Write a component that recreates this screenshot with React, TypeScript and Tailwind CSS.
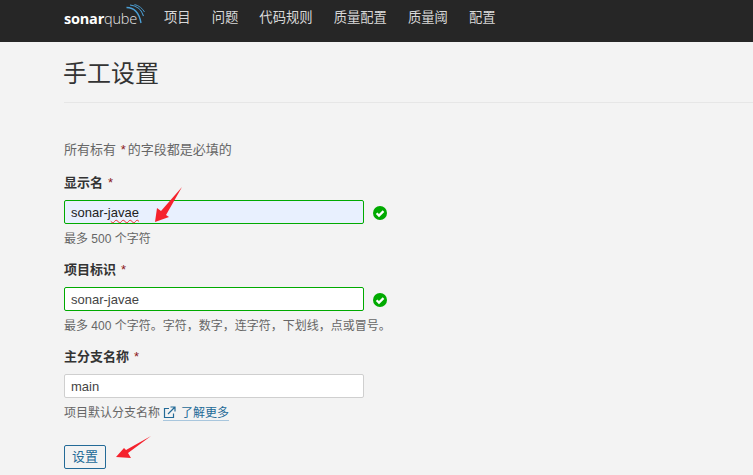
import React from "react";

function Check() {
  return (
    <svg width="14" height="14" viewBox="0 0 14 14" className="ml-[9px] mt-[2px] shrink-0">
      <circle cx="7" cy="7" r="7" fill="#00aa00" />
      <path d="M3.6 7.2 L6 9.6 L10.5 5.1" fill="none" stroke="#fff" strokeWidth="2.2" />
    </svg>
  );
}

function Star() {
  return <span className="text-[#8b1a1a] font-normal ml-[5px]">*</span>;
}

function Field({ label, children, valid, hint, bg = "bg-white", border = "border-[#00aa00]", color = "text-[#444]" }: any) {
  return (
    <div className="h-[87px] flex flex-col">
      <div className="h-[16px] leading-[16px] text-[13px] font-bold text-[#333]">{label}<Star /></div>
      <div className="flex items-center mt-[9px]">
        <div className={`w-[300px] h-[24px] border rounded-[2px] px-[6px] text-[13px] leading-[23px] ${bg} ${border} ${color}`}>{children}</div>
        {valid && <Check />}
      </div>
      <div className="mt-[7px] h-[16px] leading-[16px] text-[12px] text-[#666] flex items-center">{hint}</div>
    </div>
  );
}

export default function App() {
  return (
    <div className="relative w-[753px] h-[475px] overflow-hidden bg-[#f3f3f3]" style={{ fontFamily: '"Liberation Sans","Noto Sans CJK SC",sans-serif' }}>
      <header className="h-[42px] bg-[#262626] flex items-center pl-[64px]">
        <div className="relative w-[83px] h-[42px] flex items-center mr-[17px]">
          <span className="text-[14.5px] leading-none text-white mt-[-4px] whitespace-nowrap tracking-[-0.2px]" style={{ fontFamily: '"Open Sans",sans-serif' }}>
            <span className="font-bold">sonar</span><span className="font-light text-[#e8e8e8]">qube</span>
          </span>
          <svg width="22" height="22" viewBox="0 0 22 22" className="absolute left-[62px] top-[4px]">
            <path d="M0.5 3.5 C7 3.5 13 8 15 19" fill="none" stroke="#4b9fd5" strokeWidth="1.4" />
            <path d="M4 1 C10 1.5 15.5 5.5 17.5 12" fill="none" stroke="#4b9fd5" strokeWidth="1.1" />
            <path d="M8.5 0.5 C13 1.5 16.5 4.5 18.5 8" fill="none" stroke="#4b9fd5" strokeWidth="0.9" />
          </svg>
        </div>
        <nav className="flex gap-[21px] text-[13.33px] text-[#d8d8d8] mt-[-7px]">
          {["项目", "问题", "代码规则", "质量配置", "质量阈", "配置"].map((t) => (
            <span key={t}>{t}</span>
          ))}
        </nav>
      </header>
      <main className="pl-[64px]">
        <div className="h-[61px] border-b border-[#e6e6e6] flex items-center">
          <h1 className="text-[24px] leading-[32px] text-[#333] mt-[4px] ml-[-1px]">手工设置</h1>
        </div>
        <p className="mt-[39px] h-[16px] leading-[16px] text-[13px] text-[#666]">所有标有 <span className="text-[#8b1a1a] ml-[1px] mr-[2px]">*</span>的字段都是必填的</p>
        <div className="mt-[17px]">
          <Field label="显示名" valid bg="bg-[#e8f0fe]" color="text-[#222]" hint="最多 500 个字符">
            sonar-j<span className="underline decoration-wavy decoration-[#f03030] decoration-1 underline-offset-2">avae</span>
          </Field>
          <Field label="项目标识" valid hint="最多 400 个字符。字符，数字，连字符，下划线，点或冒号。">sonar-javae</Field>
          <Field label="主分支名称" border="border-[#cfcfcf]" hint={
            <>
              项目默认分支名称
              <span className="ml-[3px] border-b border-[#a8c6dd] text-[#236a97] flex items-center h-[16px]">
                <svg width="13" height="13" viewBox="0 0 13 13" fill="none" stroke="#236a97" strokeWidth="1.2" className="mr-[5px]">
                  <path d="M6 2.5 H1.5 V11.5 H10.5 V7.5" />
                  <path d="M5 8 L11.5 1.5 M7.5 1 H12 V5.5" />
                </svg>
                了解更多
              </span>
            </>
          }>main</Field>
        </div>
        <button className="mt-[9px] block w-[42px] h-[24px] border border-[#236a97] rounded-[2px] text-[13px] text-[#236a97] bg-transparent">设置</button>
      </main>
      <svg width="753" height="475" viewBox="0 0 753 475" className="absolute left-0 top-0 pointer-events-none">
        <polygon points="182,187 166,215 169,217 155,222 157,208 161,211" fill="#f5222d" />
        <polygon points="151,436 128,453 131,458 116,457 124,448 126,450" fill="#f5222d" />
      </svg>
    </div>
  );
}
